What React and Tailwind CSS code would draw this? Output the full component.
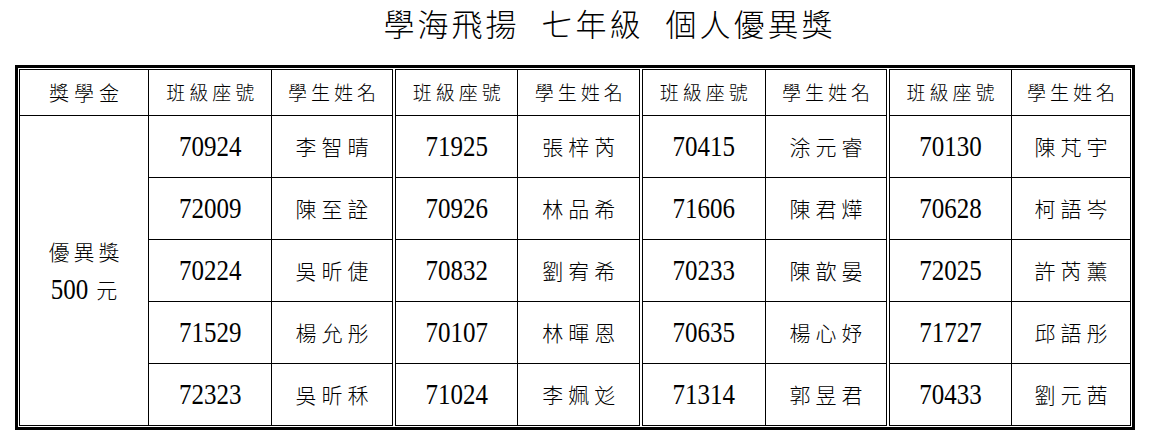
const GROUPS = 4;

const rows = [
  [["70924", "李智晴"], ["71925", "張梓芮"], ["70415", "涂元睿"], ["70130", "陳芃宇"]],
  [["72009", "陳至詮"], ["70926", "林品希"], ["71606", "陳君燁"], ["70628", "柯語岑"]],
  [["70224", "吳昕倢"], ["70832", "劉宥希"], ["70233", "陳歆晏"], ["72025", "許芮薰"]],
  [["71529", "楊允彤"], ["70107", "林暉恩"], ["70635", "楊心妤"], ["71727", "邱語彤"]],
  [["72323", "吳昕秝"], ["71024", "李姵彣"], ["71314", "郭昱君"], ["70433", "劉元茜"]],
];

// 第 1 欄 + 每組 (座號, 姓名)
const colWidths = [129, 123, 122, 124, 123, 124, 123, 123, 119];

const cjk = "font-[family-name:'Noto_Sans_CJK_TC',sans-serif] font-light";
const num = "font-[family-name:'Liberation_Serif',serif] font-normal";

export default function App() {
  return (
    <div className={`w-[1157px] h-[448px] bg-white text-black ${cjk}`}>
      {/* 標題 */}
      <div className="h-[65px] flex items-start justify-center pl-[62px] pt-[4px]">
        <h1 className="text-[31px] font-light leading-[38px] tracking-[3px]">
          學海飛揚<span className="inline-block w-[22px]" />七年級<span className="inline-block w-[22px]" />個人優異獎
        </h1>
      </div>

      {/* 表格 */}
      <div className="ml-[15px] w-[1120px] border-[3px] border-black p-px">
        <table className="w-full table-fixed border-collapse border border-black">
          <colgroup>
            {colWidths.map((w, i) => (
              <col key={i} style={{ width: w }} />
            ))}
          </colgroup>
          <thead>
            <tr className="h-[46px]">
              <th className="border border-black font-light text-[20px] tracking-[5px] pl-[5px]">獎學金</th>
              {Array.from({ length: GROUPS }).map((_, g) => (
                <HeaderPair key={g} last={g === GROUPS - 1} />
              ))}
            </tr>
          </thead>
          <tbody>
            {rows.map((r, ri) => (
              <tr key={ri} className="h-[62px]">
                {ri === 0 && (
                  <td rowSpan={5} className="border border-black text-center align-middle">
                    <div className="text-[21px] tracking-[4px] pl-[4px] leading-[38px]">優異獎</div>
                    <div className="leading-[38px]">
                      <span className={`${num} inline-block text-[25px] scale-y-[1.15]`}>500</span>
                      <span className="text-[21px] ml-[8px]">元</span>
                    </div>
                  </td>
                )}
                {r.map(([id, name], g) => (
                  <Pair key={g} id={id} name={name} last={g === GROUPS - 1} />
                ))}
              </tr>
            ))}
          </tbody>
        </table>
      </div>
    </div>
  );
}

function HeaderPair({ last }) {
  return (
    <>
      <th className="border border-black font-light text-[19px] tracking-[4px] pl-[4px]">班級座號</th>
      <th
        className={
          last
            ? "border border-black font-light text-[19px] tracking-[4px] pl-[4px]"
            : "border border-black border-double border-r-[4px] font-light text-[19px] tracking-[4px] pl-[4px]"
        }
      >
        學生姓名
      </th>
    </>
  );
}

function Pair({ id, name, last }) {
  return (
    <>
      <td className="border border-black text-center">
        <span className={`${num} inline-block text-[25px] leading-none scale-y-[1.15]`}>{id}</span>
      </td>
      <td
        className={
          last
            ? "border border-black text-center text-[21px] tracking-[5px] pl-[5px]"
            : "border border-black border-double border-r-[4px] text-center text-[21px] tracking-[5px] pl-[5px]"
        }
      >
        {name}
      </td>
    </>
  );
}
